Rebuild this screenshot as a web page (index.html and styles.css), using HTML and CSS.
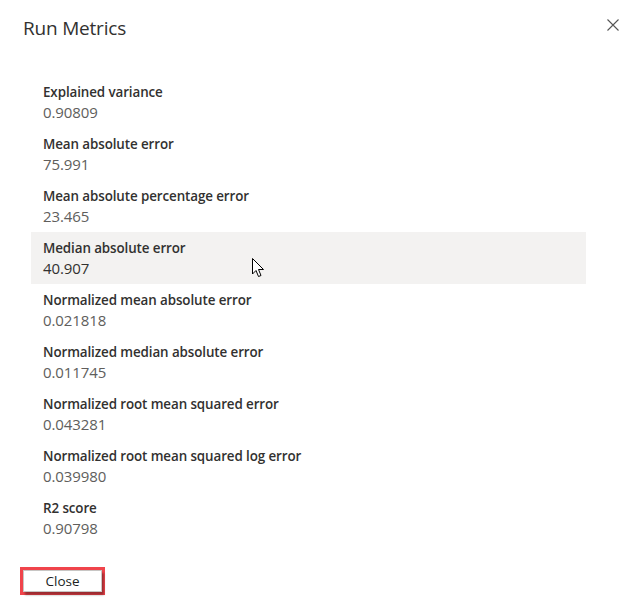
FILE: index.html
```html
<!DOCTYPE html>
<html>
<head>
<meta charset="utf-8">
<link rel="stylesheet" href="styles.css">
</head>
<body>
<div class="dialog">
  <div class="header">
    <h1 class="title">Run Metrics</h1>
    <button class="close-x" aria-label="Close">
      <svg width="12" height="12" viewBox="0 0 12 12"><path d="M0.5 0.5 L11.5 11.5 M11.5 0.5 L0.5 11.5" stroke="#555" stroke-width="1.1" fill="none"/></svg>
    </button>
  </div>
  <div class="list">
    <div class="row"><div class="label">Explained variance</div><div class="value">0.90809</div></div>
    <div class="row"><div class="label">Mean absolute error</div><div class="value">75.991</div></div>
    <div class="row"><div class="label">Mean absolute percentage error</div><div class="value">23.465</div></div>
    <div class="row hover"><div class="label">Median absolute error</div><div class="value dark">40.907</div>
      <svg class="cursor" width="13" height="20" viewBox="0 0 13 20"><path d="M0.5 0.5 L0.5 16 L4 12.5 L6.5 18.5 L9 17.5 L6.5 11.5 L11.5 11.5 Z" fill="#fff" stroke="#000" stroke-width="1"/></svg>
    </div>
    <div class="row"><div class="label">Normalized mean absolute error</div><div class="value">0.021818</div></div>
    <div class="row"><div class="label">Normalized median absolute error</div><div class="value">0.011745</div></div>
    <div class="row"><div class="label">Normalized root mean squared error</div><div class="value">0.043281</div></div>
    <div class="row"><div class="label">Normalized root mean squared log error</div><div class="value">0.039980</div></div>
    <div class="row"><div class="label">R2 score</div><div class="value">0.90798</div></div>
  </div>
  <div class="footer">
    <div class="highlight-box"><button class="btn">Close</button></div>
  </div>
</div>
</body>
</html>
```
FILE: styles.css
```css
html, body {
  margin: 0;
  padding: 0;
  background: #fff;
}
body {
  font-family: "Open Sans", "Noto Sans", sans-serif;
  color: #323130;
  width: 622px;
  height: 613px;
  overflow: hidden;
}
.dialog {
  display: flex;
  flex-direction: column;
  height: 613px;
}
.header {
  display: flex;
  justify-content: space-between;
  align-items: flex-start;
  padding: 14px 0 0 23px;
  height: 62px;
  box-sizing: border-box;
}
.title {
  margin: 0;
  font-size: 19px;
  font-weight: 400;
  line-height: 28px;
  color: #323130;
  letter-spacing: -0.2px;
}
.close-x {
  border: none;
  background: none;
  padding: 0;
  margin: 5px 3px 0 0;
  width: 12px;
  height: 12px;
  display: block;
}
.close-x svg { display: block; }
.list {
  display: flex;
  flex-direction: column;
  margin: 14px 36px 0 31px;
}
.row {
  position: relative;
  height: 52px;
  padding: 6px 12px 0;
  box-sizing: border-box;
}
.row.hover { background: #f3f2f1; }
.label {
  font-size: 13.4px;
  font-weight: 600;
  line-height: 20px;
  color: #323130;
  letter-spacing: -0.1px;
}
.value {
  font-size: 15px;
  line-height: 20px;
  color: #605e5c;
  letter-spacing: -0.1px;
}
.value.dark { color: #323130; }
.cursor {
  position: absolute;
  left: 221px;
  top: 26px;
}
.footer {
  padding: 23px 0 0 20px;
}
.highlight-box {
  display: inline-block;
  border: 3px solid #f0444b;
  padding: 0;
  line-height: 0;
}
.btn {
  font-family: "Open Sans", "Noto Sans", sans-serif;
  font-size: 13.5px;
  font-weight: 400;
  color: #201f1e;
  background: #fff;
  border: 1px solid #c8c6c4;
  box-shadow: 2px 3px 2px rgba(0,0,0,0.35);
  width: 79px;
  height: 22px;
  padding: 0;
  line-height: 18px;
}
```
